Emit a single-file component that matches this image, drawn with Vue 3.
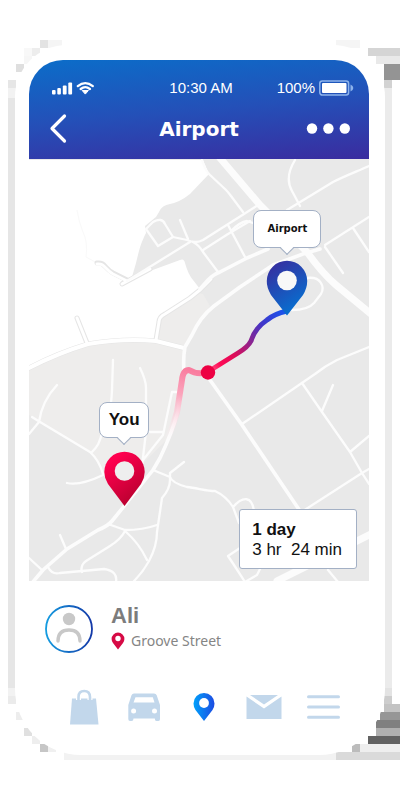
<script setup>
const tabs = ['bag', 'car', 'place', 'mail', 'menu']

// Dithered shade around the phone: x, y, width, height, colour
const shade = [
  [8, 80, 8, 8, '#e6e6e6'], [8, 88, 8, 10, '#f2f2f2'], [8, 98, 8, 590, '#e6e6e6'],
  [8, 688, 8, 8, '#f2f2f2'], [8, 696, 8, 8, '#ebebeb'], [16, 64, 8, 8, '#dfdfdf'],
  [24, 56, 8, 8, '#f6f6f6'], [24, 48, 8, 8, '#f8f8f8'], [32, 48, 8, 8, '#ededed'],
  [40, 40, 8, 8, '#e3e3e3'], [48, 40, 14, 8, '#f5f5f5'], [336, 40, 24, 8, '#f5f5f5'],
  [368, 48, 32, 8, '#d5d5d5'], [376, 56, 24, 8, '#e9e9e9'], [384, 64, 16, 16, '#949494'],
  [384, 80, 8, 8, '#d2d2d2'], [384, 88, 8, 600, '#ebebeb'], [384, 688, 8, 8, '#e3e3e3'],
  [384, 696, 8, 8, '#cdcdcd'], [384, 704, 16, 8, '#c3c3c3'], [380, 712, 20, 8, '#969696'],
  [376, 720, 24, 8, '#808080'], [376, 728, 24, 8, '#b0b0b0'], [368, 736, 32, 8, '#626262'],
  [360, 744, 40, 8, '#eeeeee'], [352, 744, 8, 8, '#bcbcbc'], [336, 752, 64, 8, '#dadada'],
  [16, 712, 8, 8, '#ededed'], [24, 728, 8, 8, '#e0e0e0'], [32, 736, 8, 8, '#eeeeee'],
  [40, 744, 8, 8, '#c6c6c6'], [48, 744, 8, 8, '#f0f0f0'], [64, 752, 272, 8, '#f2f2f2'],
]

const roads = [
  'M202 160Q205 170 210 175L225 189Q229 193 231 196L243 212',
  'M295 160C287 173 288 184 292 191L300 206',
  'M369 166C358 171 345 176 333 182L287 210',
  'M369 217L325 245',
  'M258 205L203 240Q196 244 187 240L173 237',
  'M190 242L127 281',
  'M193 242Q199 245 203 252L218 272',
  'M203 250L228 234L250 221',
  'M228 225L245 257M231 231Q240 222 247 221L262 226',
  'M353 228L369 252M325 247L343 273',
  'M307 278C321 276 325 287 321 294L314 303Q308 310 292 310',
  'M369 347L337 360Q325 366 315 374L242 424',
  'M302 383L322 412L350 452L362 473L369 484M333 385L322 411M369 436L350 452M369 469L362 473L303 511',
  'M153 470L170 477Q172 483 187 487C197 488 207 491 215 491Q226 496 233 507L239 523M233 507C243 496 252 496 254 511',
  'M177 392H172L163 435L143 460M150 432H163M140 368Q146 380 146 388V432L142 466',
  'M113 360L112 390Q111 417 102 432C100 443 97 447 92 452M57 385Q42 401 39 422M32 417L40 422L90 452Q99 460 103 474M29 434L39 422M67 483Q80 486 103 475',
  'M184 462L170 473V480Q170 489 162 498L157 532Q157 546 149 561Q143 572 134 581',
  'M108 524L125 530Q143 530 157 525M125 531Q121 539 110 546L86 561Q80 565 82 572M125 531Q139 543 147 560',
  'M60 535L66 549M29 558L42 570M48 567Q52 575 60 573L104 569Q118 571 116 582',
  'M153 222Q162 217 165 224L173 237L158 246L146 229ZM180 220L188 239',
  'M240 548L228 556L234 565L245 582L257 575L260 569M328 570L338 582',
]
</script>

<template>
  <main class="page">
    <svg class="shade" viewBox="0 0 400 800" preserveAspectRatio="none" aria-hidden="true" shape-rendering="crispEdges">
      <rect v-for="(s, i) in shade" :key="i" :x="s[0]" :y="s[1]" :width="s[2]" :height="s[3]" :fill="s[4]" />
    </svg>

    <div class="phone">
      <header class="header">
        <div class="status">
          <svg class="signal" viewBox="0 0 48 16" aria-hidden="true">
            <g fill="#fff">
              <rect x="4" y="10" width="3.6" height="4.5" rx="1" />
              <rect x="9.3" y="8" width="3.6" height="6.5" rx="1" />
              <rect x="14.8" y="5.5" width="3.8" height="9" rx="1" />
              <rect x="20.3" y="2.5" width="3.8" height="12" rx="1" />
              <path d="M34.2 10.5h6.2l-3.1 3.6z" stroke="#fff" stroke-linejoin="round" />
            </g>
            <path d="M29.8 6.1q7.5-6 15 0M32.7 9q4.6-3.7 9.2 0" fill="none" stroke="#fff" stroke-width="2.3" stroke-linecap="round" />
          </svg>
          <span>10:30 AM</span>
          <span class="power">100%
            <svg class="battery" viewBox="0 0 36 16" aria-hidden="true">
              <rect x="1.8" y=".9" width="28.8" height="14.2" rx="2.5" fill="none" stroke="#8eb4ec" stroke-width="1.5" />
              <rect x="4" y="3" width="24.5" height="10" rx="1" fill="#fff" />
              <path d="M32.5 4.5q2.8 1 2.8 3.5t-2.8 3.5z" fill="#8eb4ec" />
            </svg>
          </span>
        </div>
        <div class="bar">
          <button class="plain back" type="button" aria-label="Back">
            <svg viewBox="0 0 24 34"><path d="M16.500 4L4 16.500l12.500 12.500" fill="none" stroke="#fff" stroke-width="3.2" stroke-linecap="round" stroke-linejoin="round" /></svg>
          </button>
          <h1>Airport</h1>
          <button class="plain more" type="button" aria-label="More">
            <svg viewBox="0 0 44 34"><g fill="#fff"><circle cx="6" cy="16.5" r="5.2" /><circle cx="22.4" cy="16.5" r="5.2" /><circle cx="38.8" cy="16.5" r="5.2" /></g></svg>
          </button>
        </div>
      </header>

      <section class="map" aria-label="Route map">
        <svg class="canvas" viewBox="29 159 340 422" aria-hidden="true">
          <defs>
            <linearGradient id="bluePin" x1="0" y1="0" x2=".5" y2="1"><stop stop-color="#3b289b" /><stop offset="1" stop-color="#076fd0" /></linearGradient>
            <linearGradient id="redPin" x1="0" y1="0" x2=".6" y2="1"><stop offset=".2" stop-color="#ff004f" /><stop offset="1" stop-color="#b9002f" /></linearGradient>
            <linearGradient id="routeA" gradientUnits="userSpaceOnUse" x1="287" y1="311" x2="208" y2="373"><stop stop-color="#1557f0" /><stop offset=".28" stop-color="#4235c8" /><stop offset=".48" stop-color="#8d248f" /><stop offset=".68" stop-color="#dc0c58" /><stop offset=".85" stop-color="#ff0a55" /><stop offset="1" stop-color="#ff6f96" /></linearGradient>
            <linearGradient id="routeB" gradientUnits="userSpaceOnUse" x1="190" y1="370" x2="168" y2="443"><stop stop-color="#f97d9f" /><stop offset=".35" stop-color="#fba6bd" /><stop offset="1" stop-color="#fff" stop-opacity="0" /></linearGradient>
          </defs>
          <rect x="29" y="159" width="340" height="422" fill="#e9e9e9" />
          <path d="M29 367Q100 334 156 340L184 348V372L170 437L142 464L104 475L92 453L40 423L29 415Z" fill="#eeedec" />
          <path d="M156 340L160 317L197 293L203 294L210 306L184 348Z" fill="#eeedec" />
          <path d="M29 160H203L209 174L190 194Q180 202 170 204Q162 205 159 212L156 217L145 226L146 233C140 245 139 251 136 263L132 277L122 284L150 271L180 260Q184 258 185 263Q188 274 193 280L200 289L197 293L163 314Q159 317 159 323L156 340Q115 337 88 343Q55 352 29 367Z" fill="#fff" />
          <path d="M77 210Q79 223 83 232Q88 242 86 257L97 263" fill="none" stroke="#f9f9f9" />
          <g fill="none" stroke-linecap="round" stroke-linejoin="round">
            <g stroke="#e5e5e5" stroke-width="5">
              <path d="M97 263C105 262 104 268 113 273L127 280L122 284L150 269" />
              <path d="M77 318L87 343M29 368Q58 353 88 344Q124 338 156 341L184 348M156 340L159 322Q159 317 165 314L190 298L200 290L211 279" />
            </g>
            <g stroke="#fff" stroke-width="3">
              <path d="M97 264C105 263 104 269 113 274L127 281L122 284L150 269" />
              <path d="M77 318L87 343M156 340L159 322Q159 317 165 314L190 298L200 290L211 279" />
            </g>
            <path d="M29 368Q58 353 88 344Q124 338 156 341L184 348" stroke="#fff" stroke-width="4" />
            <g stroke="#fcfcfc" stroke-width="2.3"><path v-for="road in roads" :key="road" :d="road" /></g>
            <g stroke="#fcfcfc" stroke-width="3.6">
              <path d="M320 249L303 254L273 265L240 287L214 306Q200 317 192 335L185 347Q183 357 184 374" />
              <path d="M200 289L208 280Q214 274 220 272L247 258L268 249" />
              <path d="M210 380L242 425L300 511M183 378L178 411Q172 433 160 458L153 470L125 505L112 521Q108 526 98 530L67 549L43 570L32 583" />
            </g>
            <path d="M220 158L260 205L307 252Q322 273 336 285L371 314M371 534L335 552L277 581" stroke="#fcfcfc" stroke-width="7" />
            <path d="M204 373Q195 374 189 370Q183 370 182 380L177 412Q173 427 166 443" stroke="url(#routeB)" stroke-width="6" stroke-linecap="butt" />
            <path d="M206 373L238 353Q248 347 251 341Q255 328 267 320Q274 314 287 311" stroke="url(#routeA)" stroke-width="5" />
          </g>
          <circle cx="208" cy="372.5" r="7.2" fill="#ed0043" />
          <path d="M287 315.500L271 295Q266.500 287 266.800 281A20.200 20.200 0 0 1 307.200 281Q307.200 288 303 295Z" fill="url(#bluePin)" />
          <circle cx="287" cy="280.500" r="9.800" fill="#f8f8f8" />
          <path d="M124.500 506L108 484Q104.300 478 104.300 472A20.200 20.200 0 0 1 144.700 472Q144.700 478 141 484Z" fill="url(#redPin)" />
          <circle cx="124.500" cy="471" r="9.800" fill="#eee" />
        </svg>
        <span class="bubble airport">Airport</span>
        <span class="bubble you">You</span>
        <p class="eta"><strong>1 day</strong><span>3 hr&nbsp; 24 min</span></p>
      </section>

      <section class="profile">
        <svg class="avatar" viewBox="0 0 48 48" aria-hidden="true">
          <defs><linearGradient id="ring"><stop stop-color="#159ce0" /><stop offset="1" stop-color="#1439a8" /></linearGradient></defs>
          <circle cx="24" cy="24" r="23" fill="none" stroke="url(#ring)" stroke-width="1.8" />
          <circle cx="24" cy="14" r="6.200" fill="#c8c8c8" />
          <path d="M13 36Q13 25 24 25T35 36" fill="none" stroke="#c8c8c8" stroke-width="3.400" stroke-linecap="round" />
        </svg>
        <div class="who">
          <h2>Ali</h2>
          <p class="address">
            <svg class="spot" viewBox="0 0 14 18" aria-hidden="true">
              <path d="M7 17.500L2 11Q.6 9 .6 7A6.400 6.400 0 0 1 13.400 7Q13.400 9 12 11Z" fill="#d60a45" />
              <circle cx="7" cy="6.500" r="2.700" fill="#fff" />
            </svg>
            Groove Street
          </p>
        </div>
      </section>

      <nav class="tabs" aria-label="Main">
        <button v-for="tab in tabs" :key="tab" class="plain" type="button" :aria-label="tab">
          <svg viewBox="0 0 36 36" fill="#c2d7eb">
            <g v-if="tab === 'bag'">
              <path d="M6 9.500H30L32.500 35.500H4Z" />
              <path d="M12.500 11V8Q12.500 2 18.200 2T24 8V11" fill="none" stroke="#fff" stroke-width="5" />
              <path d="M12.500 11V8Q12.500 2 18.200 2T24 8V11" fill="none" stroke="#c2d7eb" stroke-width="2.600" stroke-linecap="round" />
            </g>
            <path v-else-if="tab === 'car'" fill-rule="evenodd" d="M8 4.500H28Q30 4.500 30.700 6.300L34 16V30Q34 32 32.500 32H30.500Q28.800 32 28.800 29.500H7.500Q7.500 32 5.500 32H4Q2.300 32 2.300 30V16L5.500 6.300Q6.200 4.500 8 4.500ZM9.500 8.300L7.500 13.500H28.500L26.800 8.300ZM7.600 19.500A2.500 2.500 0 1 0 7.600 24.500 2.500 2.500 0 1 0 7.600 19.500ZM28.500 19.500A2.500 2.500 0 1 0 28.500 24.500 2.500 2.500 0 1 0 28.500 19.500Z" />
            <g v-else-if="tab === 'place'">
              <defs><linearGradient id="spotBlue"><stop stop-color="#00a0fa" /><stop offset="1" stop-color="#1d4ce2" /></linearGradient></defs>
              <path d="M18 32L9.500 21Q7.500 18 7.500 14.500A10.500 10.500 0 0 1 28.500 14.500Q28.500 18 26.500 21Z" fill="url(#spotBlue)" />
              <circle cx="18" cy="14" r="4.900" fill="#fff" />
            </g>
            <path v-else-if="tab === 'mail'" d="M4 6H32L18 15.500ZM.5 7.500L18 19.500 35.500 7.500V30H.5Z" />
            <path v-else d="M2.500 7.700H32.500M2.500 18H32.500M2.500 28.300H32.500" stroke="#c2d7eb" stroke-width="3" stroke-linecap="round" />
          </svg>
        </button>
      </nav>
    </div>
  </main>
</template>

<style>
body {
  margin: 0;
  background: #fff;
}
</style>

<style scoped>
.page {
  position: relative;
  box-sizing: border-box;
  min-height: 100vh;
  padding: 45px 15px;
  font-family: "Liberation Sans", Arial, sans-serif;
  color: #111;
}
.shade {
  position: absolute;
  inset: 0;
  width: 100%;
  height: 100%;
}
.phone {
  position: relative;
  padding: 15px 16px 30px 14px;
  background: #fff;
  border-radius: 52px 52px 66px 66px;
}
svg {
  display: block;
}
h1, h2, p {
  margin: 0;
}
.plain {
  display: block;
  padding: 0;
  border: 0;
  background: none;
  cursor: pointer;
}
.header {
  display: flex;
  flex-direction: column;
  gap: 14px;
  padding: 18px 15px 13px 19px;
  border-radius: 34px 34px 0 0;
  background: linear-gradient(175deg, #0b6dc9, #2450b8 50%, #3a2c9f);
  color: #fff;
}
.status {
  display: grid;
  grid-template-columns: 1fr auto 1fr;
  align-items: center;
  font-size: 15px;
  line-height: 20px;
}
.signal {
  width: 48px;
  height: 16px;
}
.power {
  display: flex;
  align-items: center;
  justify-content: flex-end;
  gap: 3px;
}
.battery {
  width: 36px;
  height: 16px;
}
.bar {
  display: grid;
  grid-template-columns: 1fr auto 1fr;
  align-items: center;
  padding-right: 4px;
}
.bar h1 {
  font: 700 20px/34px "DejaVu Sans", sans-serif;
}
.back {
  width: 24px;
}
.more {
  width: 44px;
  justify-self: end;
}
.map {
  position: relative;
}
.canvas {
  width: 100%;
  height: auto;
}
.bubble {
  position: absolute;
  box-sizing: border-box;
  display: flex;
  align-items: center;
  justify-content: center;
  transform: translateX(-50%);
  border: 1px solid #a3b0c5;
  border-radius: 8px;
  background: #fff;
}
.bubble::after {
  content: "";
  position: absolute;
  left: 50%;
  bottom: -6px;
  width: 10px;
  height: 10px;
  box-sizing: border-box;
  border: solid #a3b0c5;
  border-width: 0 1px 1px 0;
  background: linear-gradient(135deg, transparent 50%, #fff 50%);
  transform: translateX(-50%) rotate(45deg);
}
.airport {
  left: 76%;
  top: 12%;
  width: 68px;
  height: 38px;
  font: 700 10px/16px "DejaVu Sans", sans-serif;
}
.you {
  left: 28%;
  top: 57.5%;
  width: 50px;
  height: 36px;
  font: 700 17px/20px "Liberation Sans", sans-serif;
}
.eta {
  position: absolute;
  right: 12px;
  bottom: 12px;
  display: flex;
  flex-direction: column;
  box-sizing: border-box;
  padding: 10px 14px 8px 12px;
  border: 1px solid #a3b0c5;
  border-radius: 3px;
  background: #fff;
  font-size: 17px;
  line-height: 20px;
  white-space: nowrap;
}
.profile {
  display: flex;
  align-items: center;
  gap: 18px;
  padding: 23px 16px 0;
}
.avatar {
  flex: none;
  width: 48px;
  height: 48px;
}
.who h2 {
  font: 700 22px/24px "Liberation Sans", sans-serif;
  color: #7c7c7c;
}
.address {
  display: flex;
  align-items: center;
  gap: 6px;
  font: 14px/26px "Noto Sans", sans-serif;
  color: #858585;
}
.spot {
  width: 14px;
  height: 18px;
}
.tabs {
  display: grid;
  grid-template-columns: repeat(5, 1fr);
  justify-items: center;
  padding: 35px 15px 0 25px;
}
.tabs .plain {
  width: 36px;
  height: 36px;
}
</style>
